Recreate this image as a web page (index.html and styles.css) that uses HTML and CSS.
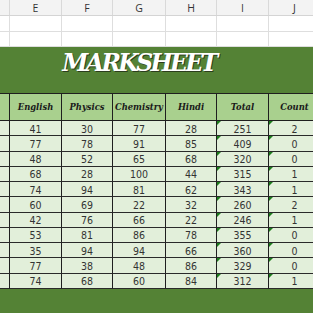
FILE: index.html
```html
<!DOCTYPE html>
<html>
<head>
<meta charset="utf-8">
<link rel="stylesheet" href="styles.css">
</head>
<body>
<div class="sheet">
  <div class="row colheads">
    <div class="c"></div><div class="c">E</div><div class="c">F</div><div class="c">G</div><div class="c">H</div><div class="c">I</div><div class="c">J</div>
  </div>
  <div class="row blank r16">
    <div class="c"></div><div class="c"></div><div class="c"></div><div class="c"></div><div class="c"></div><div class="c"></div><div class="c"></div>
  </div>
  <div class="row blank r15">
    <div class="c"></div><div class="c"></div><div class="c"></div><div class="c"></div><div class="c"></div><div class="c"></div><div class="c"></div>
  </div>
  <div class="title"><span>MARKSHEET</span></div>
  <div class="row thead">
    <div class="c"></div><div class="c">English</div><div class="c">Physics</div><div class="c">Chemistry</div><div class="c">Hindi</div><div class="c">Total</div><div class="c">Count</div>
  </div>
  <div class="row data"><div class="c"></div><div class="c">41</div><div class="c">30</div><div class="c">77</div><div class="c">28</div><div class="c t">251</div><div class="c t">2</div></div>
  <div class="row data"><div class="c"></div><div class="c">77</div><div class="c">78</div><div class="c">91</div><div class="c">85</div><div class="c t">409</div><div class="c t">0</div></div>
  <div class="row data"><div class="c"></div><div class="c">48</div><div class="c">52</div><div class="c">65</div><div class="c">68</div><div class="c t">320</div><div class="c t">0</div></div>
  <div class="row data"><div class="c"></div><div class="c">68</div><div class="c">28</div><div class="c">100</div><div class="c">44</div><div class="c t">315</div><div class="c t">1</div></div>
  <div class="row data"><div class="c"></div><div class="c">74</div><div class="c">94</div><div class="c">81</div><div class="c">62</div><div class="c t">343</div><div class="c t">1</div></div>
  <div class="row data"><div class="c"></div><div class="c">60</div><div class="c">69</div><div class="c">22</div><div class="c">32</div><div class="c t">260</div><div class="c t">2</div></div>
  <div class="row data"><div class="c"></div><div class="c">42</div><div class="c">76</div><div class="c">66</div><div class="c">22</div><div class="c t">246</div><div class="c t">1</div></div>
  <div class="row data"><div class="c"></div><div class="c">53</div><div class="c">81</div><div class="c">86</div><div class="c">78</div><div class="c t">355</div><div class="c t">0</div></div>
  <div class="row data"><div class="c"></div><div class="c">35</div><div class="c">94</div><div class="c">94</div><div class="c">66</div><div class="c t">360</div><div class="c t">0</div></div>
  <div class="row data"><div class="c"></div><div class="c">77</div><div class="c">38</div><div class="c">48</div><div class="c">86</div><div class="c t">329</div><div class="c t">0</div></div>
  <div class="row data"><div class="c"></div><div class="c">74</div><div class="c">68</div><div class="c">60</div><div class="c">84</div><div class="c t">312</div><div class="c t">1</div></div>
  <div class="footer"></div>
</div>
</body>
</html>
```
FILE: styles.css
```css
html, body {
  margin: 0;
  padding: 0;
  background: #ffffff;
  overflow: hidden;
}
.sheet {
  width: 313px;
  height: 313px;
  overflow: hidden;
  display: flex;
  flex-direction: column;
}
.row {
  display: grid;
  grid-template-columns: 10px 52px 51px 53px 51px 52px 52px;
  box-sizing: border-box;
  flex: none;
}
.c {
  box-sizing: border-box;
  display: flex;
  align-items: center;
  justify-content: center;
  position: relative;
}
.colheads {
  height: 16px;
  background: #f3f3f3;
  border-bottom: 1px solid #d4d4d4;
  font-family: "Open Sans", "DejaVu Sans", sans-serif;
  font-size: 10.5px;
  color: #333;
}
.colheads .c {
  border-right: 1px solid #d9d9d9;
}
.blank .c {
  border-right: 1px solid #dedede;
  border-bottom: 1px solid #dedede;
}
.r16 { height: 16px; }
.r15 { height: 15px; }
.title {
  flex: none;
  width: 340px;
  height: 46px;
  background: #548235;
  display: flex;
  align-items: flex-start;
  justify-content: center;
  padding-right: 62px;
  padding-top: 5px;
  box-sizing: border-box;
}
.title span {
  font-family: "DejaVu Serif", serif;
  font-weight: bold;
  font-style: italic;
  font-size: 23.5px;
  letter-spacing: -2.6px;
  color: #ffffff;
  text-shadow: 1px 1px 0 #2b3d1c;
  line-height: 1;
}
.thead {
  height: 28px;
  background: #a9d08e;
  border-top: 1px solid #1f1f1f;
  border-bottom: 1px solid #1f1f1f;
  font-family: "DejaVu Serif", serif;
  font-weight: bold;
  font-style: italic;
  font-size: 8.4px;
  color: #1a1a1a;
}
.thead .c {
  border-right: 1px solid #1f1f1f;
}
.data {
  height: 15.27px;
  background: #e2efda;
  font-family: "DejaVu Sans Condensed", "DejaVu Sans", sans-serif;
  font-size: 10.5px;
  color: #333333;
}
.data .c {
  border-right: 1px solid #1f1f1f;
  border-bottom: 1px solid #2a2a2a;
  padding-top: 1px;
}
.data .t::before {
  content: "";
  position: absolute;
  left: 0;
  top: 0;
  width: 0;
  height: 0;
  border-top: 4px solid #1c7c1c;
  border-right: 4px solid transparent;
}
.footer {
  flex: 1;
  background: #548235;
}
```
